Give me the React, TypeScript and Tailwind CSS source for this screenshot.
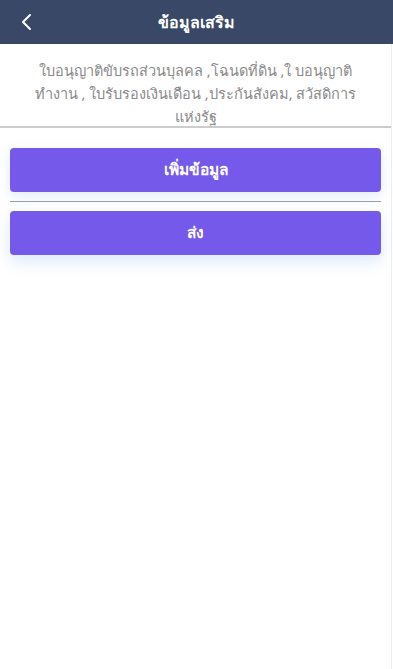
import React from "react";

export default function App() {
  return (
    <div
      className="w-[393px] h-[669px] bg-white flex flex-col"
      style={{ fontFamily: '"Noto Sans", "Liberation Sans", Tahoma, sans-serif' }}
    >
      <div className="h-[44px] bg-[#394867] flex items-center relative shrink-0">
        <button className="absolute left-[14px] top-[10px] w-[24px] h-[24px] flex items-center justify-center text-white">
          <svg width="12" height="18" viewBox="0 0 12 18" fill="none">
            <path d="M10 2 L3 9 L10 16" stroke="white" strokeWidth="2" strokeLinecap="round" strokeLinejoin="round" />
          </svg>
        </button>
        <div className="flex-1 text-center text-white font-bold text-[16px]">ข้อมูลเสริม</div>
      </div>
      <div className="flex-1 w-[392px] border-r border-[#eeeeee] flex flex-col">
        <div className="border-b-2 border-[#cccccc] px-[34px] pt-[15px] pb-[0px] h-[84px] text-center text-[14.5px] leading-[23px] text-[#8a8a8a]">
          ใบอนุญาติขับรถส่วนบุลคล ,โฉนดที่ดิน ,ใ บอนุญาติทำงาน , ใบรับรองเงินเดือน ,ประกันสังคม, สวัสดิการแห่งรัฐ
        </div>
        <div className="px-[10px] pt-[20px] flex flex-col">
          <button className="h-[44px] rounded-[4px] bg-[#7559ea] text-white font-semibold text-[15.5px] shadow-[0_4px_14px_rgba(90,150,230,0.18)]">
            เพิ่มข้อมูล
          </button>
          <div className="h-px bg-[#9aa0a8] mt-[9px] mb-[9px]" />
          <button className="h-[44px] rounded-[4px] bg-[#7559ea] text-white font-semibold text-[15.5px] shadow-[0_6px_16px_rgba(90,150,230,0.22)]">
            ส่ง
          </button>
        </div>
      </div>
    </div>
  );
}
